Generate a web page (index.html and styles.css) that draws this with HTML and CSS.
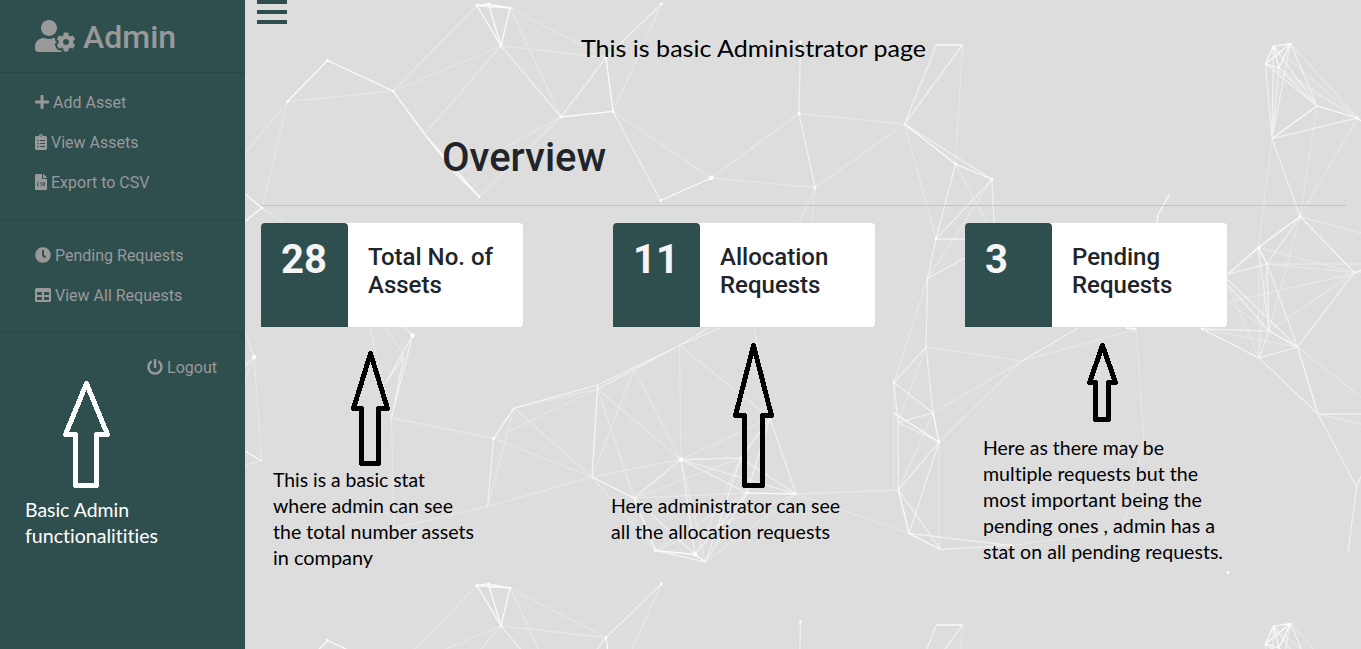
FILE: index.html
```
<!DOCTYPE html>
<html lang="en">
<head>
<meta charset="utf-8">
<title>Admin</title>
<link rel="stylesheet" href="styles.css">
</head>
<body>
<div class="page">
  <nav class="sidebar">
    <h2 class="brand"><svg class="icon-brand" viewBox="0 0 640 512"><path d="M610.5 373.3c2.6-14.1 2.6-28.5 0-42.6l25.8-14.9c3-1.7 4.3-5.2 3.3-8.5-6.7-21.6-18.2-41.2-33.2-57.4-2.3-2.5-6-3.1-9-1.4l-25.8 14.9c-10.9-9.3-23.4-16.5-36.9-21.3v-29.8c0-3.4-2.4-6.4-5.7-7.1-22.3-5-45-4.8-66.2 0-3.3.7-5.7 3.7-5.7 7.1v29.8c-13.5 4.8-26 12-36.9 21.3l-25.8-14.9c-2.9-1.7-6.7-1.1-9 1.4-15 16.2-26.5 35.8-33.2 57.4-1 3.3.4 6.8 3.3 8.5l25.8 14.9c-2.6 14.1-2.6 28.5 0 42.6l-25.8 14.9c-3 1.7-4.3 5.2-3.3 8.5 6.7 21.6 18.2 41.1 33.2 57.4 2.3 2.5 6 3.1 9 1.4l25.8-14.9c10.9 9.3 23.4 16.5 36.9 21.3v29.8c0 3.4 2.4 6.4 5.7 7.1 22.3 5 45 4.8 66.2 0 3.3-.7 5.7-3.7 5.7-7.1v-29.8c13.5-4.8 26-12 36.9-21.3l25.8 14.9c2.9 1.7 6.7 1.1 9-1.4 15-16.2 26.5-35.8 33.2-57.4 1-3.3-.4-6.8-3.3-8.5l-25.8-14.9zM496 400.5c-26.8 0-48.5-21.8-48.5-48.5s21.8-48.5 48.5-48.5 48.5 21.8 48.5 48.5-21.7 48.5-48.5 48.5zM224 256c70.7 0 128-57.3 128-128S294.7 0 224 0 96 57.3 96 128s57.3 128 128 128zm201.2 226.5c-2.3-1.2-4.6-2.6-6.8-3.9l-7.9 4.6c-6 3.4-12.8 5.3-19.6 5.3-10.9 0-21.4-4.6-28.9-12.6-18.3-19.8-32.3-43.9-40.2-69.6-5.5-17.7 1.9-36.4 17.9-45.7l7.9-4.6c-.1-2.6-.1-5.2 0-7.8l-7.9-4.6c-16-9.2-23.4-28-17.9-45.7.9-2.9 2.2-5.8 3.2-8.7-3.8-.3-7.5-1.2-11.4-1.2h-16.7c-22.2 10.2-46.9 16-72.9 16s-50.6-5.8-72.9-16h-16.7C60.2 288 0 348.2 0 422.4V464c0 26.5 21.5 48 48 48h352c10.1 0 19.5-3.2 27.2-8.5-1.2-3.8-2-7.7-2-11.8v-9.2z"/></svg>Admin</h2>
    <ul class="menu">
      <li><a class="link"><svg class="icon w14" viewBox="0 0 448 512"><path d="M416 208H272V64c0-17.7-14.3-32-32-32h-32c-17.7 0-32 14.3-32 32v144H32c-17.7 0-32 14.3-32 32v32c0 17.7 14.3 32 32 32h144v144c0 17.7 14.3 32 32 32h32c17.7 0 32-14.3 32-32V304h144c17.7 0 32-14.3 32-32v-32c0-17.7-14.3-32-32-32z"/></svg>Add Asset</a></li>
      <li><a class="link"><svg class="icon w12" viewBox="0 0 384 512"><path fill-rule="evenodd" d="M336 64h-80c0-35.300-28.700-64-64-64s-64 28.700-64 64H48C21.500 64 0 85.500 0 112v352c0 26.500 21.500 48 48 48h288c26.500 0 48-21.500 48-48V112c0-26.500-21.500-48-48-48zM96 424a24 24 0 1 1 0-48 24 24 0 0 1 0 48zm0-96a24 24 0 1 1 0-48 24 24 0 0 1 0 48zm0-96a24 24 0 1 1 0-48 24 24 0 0 1 0 48zm96-192a24 24 0 1 1 0 48 24 24 0 0 1 0-48zm128 368c0 4.400-3.600 8-8 8H168c-4.400 0-8-3.600-8-8v-16c0-4.400 3.600-8 8-8h144c4.400 0 8 3.600 8 8zm0-96c0 4.400-3.600 8-8 8H168c-4.400 0-8-3.600-8-8v-16c0-4.400 3.600-8 8-8h144c4.400 0 8 3.600 8 8zm0-96c0 4.400-3.600 8-8 8H168c-4.400 0-8-3.600-8-8v-16c0-4.400 3.600-8 8-8h144c4.400 0 8 3.600 8 8z"/></svg>View Assets</a></li>
      <li><a class="link"><svg class="icon w12" viewBox="0 0 384 512"><path d="M224 136V0H24C10.700 0 0 10.700 0 24v464c0 13.300 10.700 24 24 24h336c13.300 0 24-10.700 24-24V160H248c-13.200 0-24-10.800-24-24zM377 105L279 7c-4.500-4.500-10.600-7-17-7h-6v128h128v-6c0-6.300-2.500-12.400-7-17z"/><path class="cut" d="M128 272h-16c-18 0-32 14-32 32v48c0 18 14 32 32 32h16M220 272h-18c-26 0-26 34-8 48l14 14c16 18 8 50-12 50h-20M256 264v24c0 38 12 70 24 96 12-26 24-58 24-96v-24"/></svg>Export to CSV</a></li>
    </ul>
    <ul class="menu">
      <li><a class="link"><svg class="icon w16" viewBox="0 0 512 512"><path d="M256 8C119 8 8 119 8 256s111 248 248 248 248-111 248-248S393 8 256 8zm92.500 313l-20 25a16 16 0 0 1-22.500 2.500l-67-49.700a40 40 0 0 1-15-31.200V112a16 16 0 0 1 16-16h32a16 16 0 0 1 16 16v144l58 42.500a16 16 0 0 1 2.500 22.500z"/></svg>Pending Requests</a></li>
      <li><a class="link"><svg class="icon w16" viewBox="0 0 512 512"><path d="M464 32H48C21.500 32 0 53.500 0 80v352c0 26.500 21.500 48 48 48h416c26.500 0 48-21.500 48-48V80c0-26.500-21.500-48-48-48zM224 416H64v-96h160v96zm0-160H64v-96h160v96zm224 160H288v-96h160v96zm0-160H288v-96h160v96z"/></svg>View All Requests</a></li>
    </ul>
    <a class="link logout"><svg class="icon w16" viewBox="0 0 512 512"><path d="M400 54.100c63 45 104 118.600 104 201.900 0 136.800-110.800 247.700-247.500 248C120 504.300 8.200 393 8 256.400 7.900 173.100 48.900 99.300 111.800 54.200c11.700-8.300 28-4.800 35 7.700L162.600 90c5.900 10.500 3.100 23.800-6.600 31-41.500 30.800-68 79.600-68 134.900-.1 92.300 74.500 168.100 168 168.100 91.600 0 168.600-74.200 168-169.100-.3-51.800-24.700-101.800-68.100-134-9.700-7.200-12.400-20.500-6.500-30.900l15.800-28.100c7-12.400 23.200-16.100 34.800-7.800zM296 264V24c0-13.300-10.700-24-24-24h-32c-13.300 0-24 10.700-24 24v240c0 13.300 10.700 24 24 24h32c13.300 0 24-10.700 24-24z"/></svg>Logout</a>
  </nav>

  <main class="content">
    <svg class="mesh" viewBox="245 0 1116 649">
      <g id="tile">
        <path class="faint" d="M477 5.500L393 91L501 46L424.500 134M510 8L606 57.500L501 46M510 8L561 117L456 174M561 117L479 196.500M393 91L287.500 101.500L245 153M287.500 101.500L262 208L300 233M661.500 4L613 111.500L711 178L799 113.500L904.500 124L815 187.500L711 178M815 187.500L799 223M815 187.500L812 223M962.500 45L955.500 164M904.500 124L936 239M992 179.500L927.500 278.500M955.500 164L992 232M1317 106L1300 216.500L1357.500 118L1273.500 46M1290.500 43.500L1357.500 118L1265.500 64M1279 68L1357.500 118M1272 138.500L1258.500 247.500M1258.500 247.500L1354.500 272.500L1267 264H1361M1300 216.500L1361 233M1300 216.500L1269 331M1300 216.500L1354.500 272.500M1258.500 247.500L1259 358M1267 264L1259 358M1228 285L1259 358M1228 302L1269 331L1354.500 272.500M1228 302L1361 272M1202 329L1297.500 347M1202 329L1259 358M1297.500 347L1361 397M1297.500 347L1318 414M1318 414L1361 424M894 382.500L927.500 278.500M926 347L1022 361L1136 329L1144 440L1123 530L1011 545.500M933 413L1022 361L939 442M926 347L898 422.500M796 494L898.500 490M796 494L909 533.500M933 413L898.500 490M939 442V549.500M894 382.500V490M370 328L391.500 418L394 528L487.500 506.500M391.500 418L493.500 438.500M254 357L245 331M254 357L245 380M254 357L261.500 461L245 465M404 356L386 328M514 408L592 477M514 408L487.500 506.500M493.500 438.500L592 477L487.500 506.500L514 408L597.500 389L493.500 438.500M597.500 389L592 477L634 369L681 459.500L597.500 389L634 498M679.500 345.500L681 459.500M679.500 345.500L770 418L681 459.500M754 328L770 418M592 477L655.500 550.500M634 498L741 458L695 554.500M634 498L747 493L655.500 550.500M796 494L655.500 550.500M796 494L705.500 562M592 477L681 459.500L705.500 562M634 369L592 477"/>
        <path class="medium" d="M501 46L561 117M613 111.500L660.500 200.500M661.500 4L606 57.500L561 117M799 113.500L800.500 42M815 187.500L799 113.500M904.500 124L936.500 45M904.500 124L962.500 45M904.500 124L992 179.500L936 239L955.500 164M992 179.500L994 225M936 239H965M965 258L927.500 278.500L926 347L894 382.500M936 239L927.500 278.500M926 347L933 413M894 382.500L933 413L898 422.500L894 382.500M898 422.500L939 442L898.500 490L898 422.500M898.500 490L940.500 549.500M939 442L909 533.500L1011 545.500L940.500 549.500M1022 361L1078 328M1265.500 64L1317 106L1279 68M1290.500 43.500L1317 106L1273.500 46M1265.500 64L1272 138.500L1279 68M1273.500 46L1272 138.500L1290.500 43.500M1357.500 118L1272 138.500L1300 216.500L1267 264L1228 274M1300 216.500L1354.500 272.500L1297.500 347L1267 264L1269 331L1258.500 247.500M1228 285L1269 331M1228 280L1297.500 347L1259 358L1269 331L1202 329L1259 358L1318 414H1361M1297.500 347L1318 414L1356.500 487L1348 553M1356.500 487L1361 476M404 327L412.500 335.500L385 384L404 356L391.500 418L412.500 335.500M254 357L245 366M514 408L597.500 385L679.500 345.500L597.500 389L592 477M679.500 345.500L720 328M679.500 345.500L708 328M493.500 438.500L487.500 506.500M681 459.500L741 458L796 494L770 418L747 493L681 459.500L796 494M681 459.500L634 498L695 554.500L681 459.500M741 458L747 493L695 554.500M747 493L705.500 562L741 458L770 418M655.500 550.500L705.500 562"/>
        <path class="bright" d="M477 5.500L488.500 4L510 8L477 5.500L501 46L488.500 4M510 8L501 46M287.500 101.500L327.500 60.500L393 91L424.500 134L456 174L479 196.500L424.500 134M606 57.500L613 111.500L561 117M245 194L262 208L245 221M660.500 200.500L711 178M936.500 45H962.500M904.500 124L955.500 164L992 179.500M1265.500 64L1273.500 46L1290.500 43.500L1265.500 64L1279 68L1290.500 43.500M1273.500 46L1279 68M1357.500 118L1317 106L1272 138.500M1357.500 118L1361 121M1169.500 194.500L1158 215L1157 223M1300 216.500L1258.500 247.500L1267 264M1258.500 247.500L1228 274M1269 331L1297.500 347M1354.500 272.500L1361 270M898.500 490L909 533.500L940.500 549.500M933 413L939 442L894 413M1126 328L1136 329M245 451L261.500 461M493.500 438.500L514 408M597.500 385V389M592 477L634 498L655.500 550.500L695 554.500L705.500 562M747 493L796 494"/>
        <path class="dots" d="M477 5.500h0M488.500 4h0M510 8h0M501 46h0M327.500 60.500h0M287.500 101.500h0M393 91h0M479 196.500h0M561 117h0M606 57.500h0M613 111.500h0M661.500 4h0M660.500 200.500h0M799 113.500h0M800.500 42h0M815 187.500h0M955.500 164h0M992 179.500h0M1357.500 118h0M1300 216.500h0M1258.500 247.500h0M936 239h0M894 382.500h0M939 442h0M1011 545.500h0M1228 572.500h0M493.500 438.500h0M262 208h0M655.500 550.500h0M741 458h0M747 493h0M1202 329h0"/>
        <path class="dots big" d="M711 178h0M254 357h0M412.500 335.500h0M681 459.500h0M695 554.500h0"/>
      </g>
      <use href="#tile" y="580"/>
    </svg>
    <button class="burger" aria-label="Menu"><span></span><span></span><span></span></button>
    <h1 class="title">Overview</h1>
    <hr class="rule">
    <div class="cards">
      <section class="card"><div class="count">28</div><h4 class="label">Total No. of Assets</h4></section>
      <section class="card"><div class="count">11</div><h4 class="label">Allocation Requests</h4></section>
      <section class="card"><div class="count">3</div><h4 class="label">Pending Requests</h4></section>
    </div>
  </main>

  <svg class="notes" viewBox="0 0 1361 649">
    <g class="arrows">
      <path class="light" d="M86.500 383.500L107.500 434.500H96.500V485.500H75.500V434.500H65.500Z"/>
      <path d="M370.500 353.500L387.500 408.500H378.500V463.500H361.500V408.500H353.500Z"/>
      <path d="M753.500 345.500L771.500 415.500H762.500V485.500H744.500V415.500H735.500Z"/>
      <path d="M1102.500 345.500L1115.500 382.500H1108.500V419.500H1095.500V382.500H1089.500Z"/>
    </g>
    <text class="heading" x="581" y="57" textLength="345" lengthAdjust="spacingAndGlyphs">This is basic Administrator page</text>
    <g class="light-text">
      <text x="25" y="517" textLength="104" lengthAdjust="spacingAndGlyphs">Basic Admin</text>
      <text x="25" y="543" textLength="133" lengthAdjust="spacingAndGlyphs">functionalitities</text>
    </g>
    <text x="273" y="487" textLength="152" lengthAdjust="spacingAndGlyphs">This is a basic stat</text>
    <text x="273" y="513" textLength="180" lengthAdjust="spacingAndGlyphs">where admin can see</text>
    <text x="273" y="539" textLength="201" lengthAdjust="spacingAndGlyphs">the total number assets</text>
    <text x="273" y="565" textLength="100" lengthAdjust="spacingAndGlyphs">in company</text>
    <text x="611" y="513" textLength="229" lengthAdjust="spacingAndGlyphs">Here administrator can see</text>
    <text x="611" y="539" textLength="219" lengthAdjust="spacingAndGlyphs">all the allocation requests</text>
    <text x="983" y="455" textLength="181" lengthAdjust="spacingAndGlyphs">Here as there may be</text>
    <text x="983" y="481" textLength="215" lengthAdjust="spacingAndGlyphs">multiple requests but the</text>
    <text x="983" y="507" textLength="219" lengthAdjust="spacingAndGlyphs">most important being the</text>
    <text x="983" y="533" textLength="232" lengthAdjust="spacingAndGlyphs">pending ones , admin has a</text>
    <text x="983" y="559" textLength="240" lengthAdjust="spacingAndGlyphs">stat on all pending requests.</text>
  </svg>
</div>
</body>
</html>
```
FILE: styles.css
```
* { box-sizing: border-box; }

body {
  margin: 0;
  font-family: Roboto, sans-serif;
  font-size: 16px;
  line-height: 24px;
  color: #212529;
  background: #ddd;
}

.page {
  position: relative;
  display: flex;
  height: 649px;
  overflow: hidden;
}

.sidebar {
  display: flex;
  flex-direction: column;
  width: 245px;
  flex: none;
  background: #2f4f4f;
  color: #999;
}

.brand {
  display: flex;
  align-items: center;
  gap: 8px;
  height: 73px;
  margin: 0;
  padding: 1px 0 0 35px;
  font-size: 32px;
  font-weight: 500;
  line-height: 38px;
  border-bottom: 1px solid #2a4747;
}

.icon-brand { width: 40px; height: 32px; margin-bottom: 2px; fill: #999; }

.menu {
  list-style: none;
  margin: 0;
  padding: 10px 0 16px 35px;
  border-bottom: 1px solid #2a4747;
}

.menu + .menu { padding-top: 16px; }

.link {
  display: flex;
  align-items: center;
  gap: 4px;
  height: 40px;
}

.icon { height: 16px; margin-bottom: 2px; fill: #999; }
.w16 { width: 16px; }
.w14 { width: 14px; }
.w12 { width: 12px; }
.cut { fill: none; stroke: #2f4f4f; stroke-width: 30; }

.logout { align-self: flex-end; margin: 15px 28px 0 0; }

.content {
  position: relative;
  flex: 1;
  padding: 0 15px 0 16px;
}

.mesh {
  position: absolute;
  top: 0;
  left: 0;
  width: 1116px;
  height: 649px;
}

.mesh path { fill: none; stroke: #fff; stroke-width: 1.3; }
.mesh .faint { stroke-opacity: .3; }
.mesh .medium { stroke-opacity: .55; }
.mesh .bright { stroke-opacity: .85; }
.mesh .dots { stroke-width: 2.8; stroke-linecap: round; }
.mesh .big { stroke-width: 4.6; }

.burger {
  position: relative;
  display: flex;
  flex-direction: column;
  gap: 6px;
  width: 30px;
  margin: 0 0 0 -4px;
  padding: 0;
  border: 0;
  background: none;
}

.burger span { width: 30px; height: 4px; background: #2f4f4f; }

.title {
  position: relative;
  margin: 110px 0 0 181px;
  font-size: 40px;
  font-weight: 500;
  line-height: 48px;
}

.rule {
  position: relative;
  height: 1px;
  margin: 23px 0 17px;
  border: 0;
  background: #c4c4c4;
}

.cards {
  position: relative;
  display: grid;
  grid-template-columns: repeat(3, 262px);
  gap: 90px;
}

.card {
  display: flex;
  height: 104px;
  border-radius: 4px;
  background: #fff;
}

.count {
  width: 87px;
  padding: 13px 20px;
  font-size: 40px;
  font-weight: 700;
  line-height: 48px;
  color: #f5f5f5;
  background: #2f4f4f;
  border-radius: 4px 4px 0 0;
  border-bottom: 1px solid #2a4646;
}

.label {
  flex: 1;
  margin: 0;
  padding: 20px 20px 0;
  font-size: 24px;
  font-weight: 500;
  line-height: 28px;
}

.notes {
  position: absolute;
  top: 0;
  left: 0;
  width: 1361px;
  height: 649px;
  font-family: Lato, Carlito, sans-serif;
  font-size: 18.5px;
  font-variant-ligatures: none;
}

.notes text { fill: #000; }
.notes .light-text text { fill: #fff; }
.notes .heading { font-size: 24px; }

.arrows path {
  fill: none;
  stroke: #000;
  stroke-width: 5;
  stroke-linejoin: round;
  shape-rendering: crispEdges;
}

.arrows .light { stroke: #fff; }
```
